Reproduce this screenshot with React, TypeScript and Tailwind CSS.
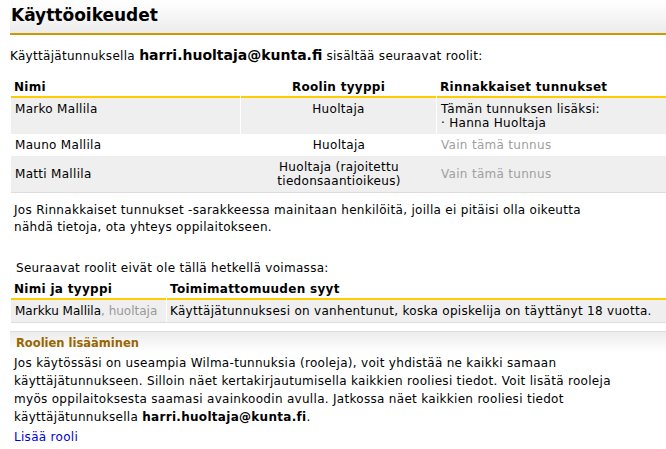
import React from 'react';

type Role = {
  name: string;
  type: string[];
  linked: string[] | null;
  shaded: boolean;
  gaps: boolean;
};

const roles: Role[] = [
  { name: 'Marko Mallila', type: ['Huoltaja'], linked: ['Tämän tunnuksen lisäksi:', '· Hanna Huoltaja'], shaded: true, gaps: true },
  { name: 'Mauno Mallila', type: ['Huoltaja'], linked: null, shaded: false, gaps: false },
  { name: 'Matti Mallila', type: ['Huoltaja (rajoitettu', 'tiedonsaantioikeus)'], linked: null, shaded: true, gaps: false },
];

const App: React.FC = () => {
  return (
    <div className="min-h-[449px] bg-white pl-[10px] font-['DejaVu_Sans',Verdana,sans-serif] text-[12px] tracking-[0.3px] text-black">
      {/* title bar */}
      <div className="h-[33px] bg-gradient-to-b from-white to-[#ececec] pl-px pt-[3px]">
        <h1 className="text-[17px] font-bold leading-[24px] tracking-normal">Käyttöoikeudet</h1>
      </div>
      <div className="h-[2px] bg-[#cc9900]" />

      <p className="mt-[11px] flex items-baseline leading-[18px]">
        Käyttäjätunnuksella&nbsp;<span className="text-[14px] font-bold tracking-normal">harri.huoltaja@kunta.fi</span>&nbsp;sisältää seuraavat roolit:
      </p>

      {/* roles table */}
      <div className="mt-[11px] pl-px">
        <div className="flex gap-px font-bold leading-[14px]">
          <div className="w-[229px] border-b-2 border-[#ffcc00] px-[3px] pt-[4px] pb-[2px]">Nimi</div>
          <div className="w-[195px] border-b-2 border-[#ffcc00] px-[3px] pt-[4px] pb-[2px] text-center">Roolin tyyppi</div>
          <div className="flex-1 border-b-2 border-[#ffcc00] px-[3px] pt-[4px] pb-[2px]">Rinnakkaiset tunnukset</div>
        </div>
        {roles.map((r) =>
          r.gaps ? (
            <div key={r.name} className="flex gap-px leading-[14px]">
              <div className="w-[229px] bg-[#efefef] px-[4px] py-[4px]">{r.name}</div>
              <div className="w-[195px] bg-[#efefef] px-[3px] py-[4px] text-center">
                {r.type.map((t) => (
                  <div key={t}>{t}</div>
                ))}
              </div>
              <div className="flex-1 bg-[#efefef] px-[4px] py-[4px]">
                {r.linked?.map((l) => <div key={l}>{l}</div>)}
              </div>
            </div>
          ) : (
            <div key={r.name} className={`flex items-center leading-[14px] ${r.shaded ? 'bg-[#efefef]' : 'bg-white'}`}>
              <div className="w-[230px] px-[4px] py-[4px]">{r.name}</div>
              <div className="w-[196px] px-[3px] py-[4px] text-center">
                {r.type.map((t) => (
                  <div key={t}>{t}</div>
                ))}
              </div>
              <div className="flex-1 px-[4px] py-[4px] text-[#a0a0a0]">Vain tämä tunnus</div>
            </div>
          )
        )}
        <div className="h-px bg-[#dddddd]" />
      </div>

      <p className="mt-[9px] w-[590px] pl-[4px] leading-[17px]">
        Jos Rinnakkaiset tunnukset -sarakkeessa mainitaan henkilöitä, joilla ei pitäisi olla oikeutta nähdä tietoja, ota yhteys oppilaitokseen.
      </p>

      <p className="mt-[24px] pl-[6px] leading-[17px]">Seuraavat roolit eivät ole tällä hetkellä voimassa:</p>

      {/* inactive roles */}
      <div className="mt-[3px] pl-px">
        <div className="flex gap-px font-bold leading-[14px]">
          <div className="w-[155px] border-b-2 border-[#ffcc00] px-[3px] pt-[2px] pb-[2px]">Nimi ja tyyppi</div>
          <div className="flex-1 border-b-2 border-[#ffcc00] px-[3px] pt-[2px] pb-[2px]">Toimimattomuuden syyt</div>
        </div>
        <div className="flex gap-px leading-[14px]">
          <div className="w-[155px] whitespace-nowrap bg-[#efefef] px-[4px] py-[4px] tracking-normal">
            Markku Mallila<span className="text-[#999999]">, huoltaja</span>
          </div>
          <div className="flex-1 bg-[#efefef] px-[3px] py-[4px]">
            Käyttäjätunnuksesi on vanhentunut, koska opiskelija on täyttänyt 18 vuotta.
          </div>
        </div>
        <div className="h-px bg-[#dddddd]" />
      </div>

      {/* adding roles */}
      <div className="mt-[8px] border-t border-[#dddddd] bg-gradient-to-b from-[#ececec] to-white pl-[6px] pt-[2px] leading-[18px]">
        <h2 className="text-[11.5px] font-bold tracking-normal text-[#996600]">Roolien lisääminen</h2>
      </div>
      <p className="mt-[2px] w-[610px] pl-[4px] leading-[18px]">
        Jos käytössäsi on useampia Wilma-tunnuksia (rooleja), voit yhdistää ne kaikki samaan käyttäjätunnukseen. Silloin näet kertakirjautumisella kaikkien rooliesi tiedot. Voit lisätä rooleja myös oppilaitoksesta saamasi avainkoodin avulla. Jatkossa näet kaikkien rooliesi tiedot käyttäjätunnuksella <b>harri.huoltaja@kunta.fi</b>.
      </p>
      <a href="#" className="mt-[2px] block pl-[4px] leading-[18px] text-[#0000dd]">
        Lisää rooli
      </a>
    </div>
  );
};

export default App;
